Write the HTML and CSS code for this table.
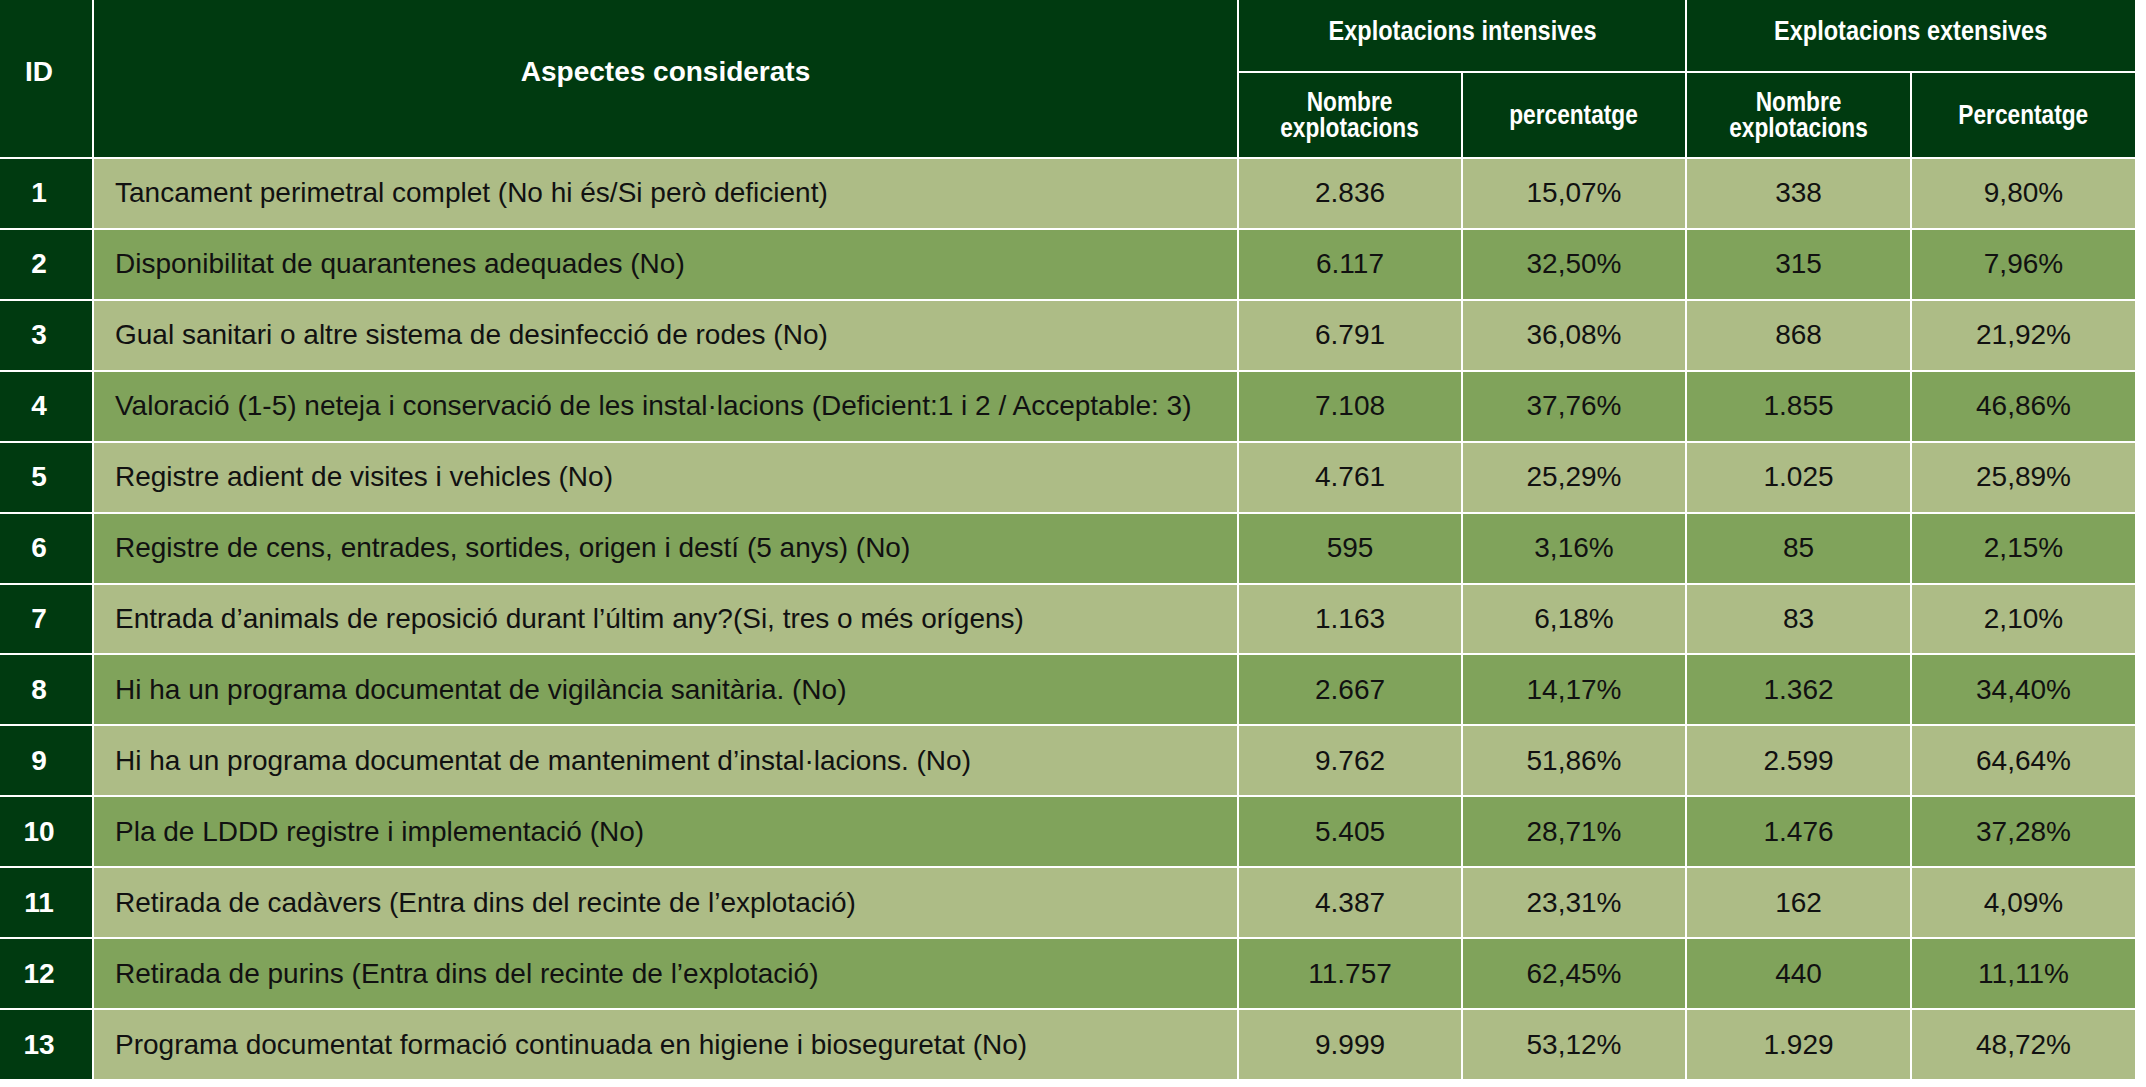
FILE: index.html
```html
<!DOCTYPE html>
<html lang="ca">
<head>
<meta charset="utf-8">
<title>Aspectes considerats</title>
<link rel="stylesheet" href="styles.css">
</head>
<body>
<div class="table">
  <div class="hd hd-id">ID</div>
  <div class="hd hd-asp">Aspectes considerats</div>
  <div class="hd hd-group hd-int"><span class="cond">Explotacions intensives</span></div>
  <div class="hd hd-group hd-ext"><span class="cond">Explotacions extensives</span></div>
  <div class="hd hd-sub"><span class="cond">Nombre<br>explotacions</span></div>
  <div class="hd hd-sub"><span class="cond">percentatge</span></div>
  <div class="hd hd-sub"><span class="cond">Nombre<br>explotacions</span></div>
  <div class="hd hd-sub"><span class="cond">Percentatge</span></div>

  <div class="id">1</div><div class="c lt txt">Tancament perimetral complet (No hi és/Si però deficient)</div><div class="c lt">2.836</div><div class="c lt">15,07%</div><div class="c lt">338</div><div class="c lt">9,80%</div>
  <div class="id">2</div><div class="c dk txt">Disponibilitat de quarantenes adequades (No)</div><div class="c dk">6.117</div><div class="c dk">32,50%</div><div class="c dk">315</div><div class="c dk">7,96%</div>
  <div class="id">3</div><div class="c lt txt">Gual sanitari o altre sistema de desinfecció de rodes (No)</div><div class="c lt">6.791</div><div class="c lt">36,08%</div><div class="c lt">868</div><div class="c lt">21,92%</div>
  <div class="id">4</div><div class="c dk txt">Valoració (1-5) neteja i conservació de les instal·lacions (Deficient:1 i 2 / Acceptable: 3)</div><div class="c dk">7.108</div><div class="c dk">37,76%</div><div class="c dk">1.855</div><div class="c dk">46,86%</div>
  <div class="id">5</div><div class="c lt txt">Registre adient de visites i vehicles (No)</div><div class="c lt">4.761</div><div class="c lt">25,29%</div><div class="c lt">1.025</div><div class="c lt">25,89%</div>
  <div class="id">6</div><div class="c dk txt">Registre de cens, entrades, sortides, origen i destí (5 anys) (No)</div><div class="c dk">595</div><div class="c dk">3,16%</div><div class="c dk">85</div><div class="c dk">2,15%</div>
  <div class="id">7</div><div class="c lt txt">Entrada d’animals de reposició durant l’últim any?(Si, tres o més orígens)</div><div class="c lt">1.163</div><div class="c lt">6,18%</div><div class="c lt">83</div><div class="c lt">2,10%</div>
  <div class="id">8</div><div class="c dk txt">Hi ha un programa documentat de vigilància sanitària. (No)</div><div class="c dk">2.667</div><div class="c dk">14,17%</div><div class="c dk">1.362</div><div class="c dk">34,40%</div>
  <div class="id">9</div><div class="c lt txt">Hi ha un programa documentat de manteniment d’instal·lacions. (No)</div><div class="c lt">9.762</div><div class="c lt">51,86%</div><div class="c lt">2.599</div><div class="c lt">64,64%</div>
  <div class="id">10</div><div class="c dk txt">Pla de LDDD registre i implementació (No)</div><div class="c dk">5.405</div><div class="c dk">28,71%</div><div class="c dk">1.476</div><div class="c dk">37,28%</div>
  <div class="id">11</div><div class="c lt txt">Retirada de cadàvers (Entra dins del recinte de l’explotació)</div><div class="c lt">4.387</div><div class="c lt">23,31%</div><div class="c lt">162</div><div class="c lt">4,09%</div>
  <div class="id">12</div><div class="c dk txt">Retirada de purins (Entra dins del recinte de l’explotació)</div><div class="c dk">11.757</div><div class="c dk">62,45%</div><div class="c dk">440</div><div class="c dk">11,11%</div>
  <div class="id">13</div><div class="c lt txt">Programa documentat formació continuada en higiene i bioseguretat (No)</div><div class="c lt">9.999</div><div class="c lt">53,12%</div><div class="c lt">1.929</div><div class="c lt">48,72%</div>
</div>
</body>
</html>
```
FILE: styles.css
```css
html, body {
  margin: 0;
  padding: 0;
  background: #ffffff;
}

.table {
  display: grid;
  width: 2135px;
  height: 1079px;
  grid-template-columns: 92px 1143px 222px 222px 223px 223px;
  grid-template-rows: 71px 84px repeat(13, 1fr);
  gap: 2px;
  background: #ffffff;
  font-family: "Liberation Sans", Arial, sans-serif;
  font-size: 28px;
  color: #111111;
}

.hd {
  background: #003a10;
  color: #ffffff;
  font-weight: bold;
  display: flex;
  align-items: center;
  justify-content: center;
  text-align: center;
}

.hd-id {
  grid-row: 1 / 3;
  grid-column: 1;
  padding: 0 14px 13px 0;
}

.hd-asp {
  grid-row: 1 / 3;
  grid-column: 2;
  padding-bottom: 13px;
}

.hd-int {
  grid-row: 1;
  grid-column: 3 / 5;
}

.hd-ext {
  grid-row: 1;
  grid-column: 5 / 7;
}

.hd-group {
  padding-bottom: 10px;
}

/* condensed bold headings: no narrow face is installed, so compress horizontally */
.cond {
  font-size: 28px;
  line-height: 27px;
  display: inline-block;
  white-space: nowrap;
  transform: scaleX(0.84);
}

.hd-sub .cond {
  font-size: 27px;
  line-height: 26px;
}

.id {
  background: #003a10;
  color: #ffffff;
  font-weight: bold;
  display: flex;
  align-items: center;
  justify-content: center;
  padding-right: 14px;
}

.c {
  display: flex;
  align-items: center;
  justify-content: center;
  white-space: nowrap;
}

.c.txt {
  justify-content: flex-start;
  padding-left: 21px;
}

.lt {
  background: #adbc86;
}

.dk {
  background: #80a35b;
}
```
